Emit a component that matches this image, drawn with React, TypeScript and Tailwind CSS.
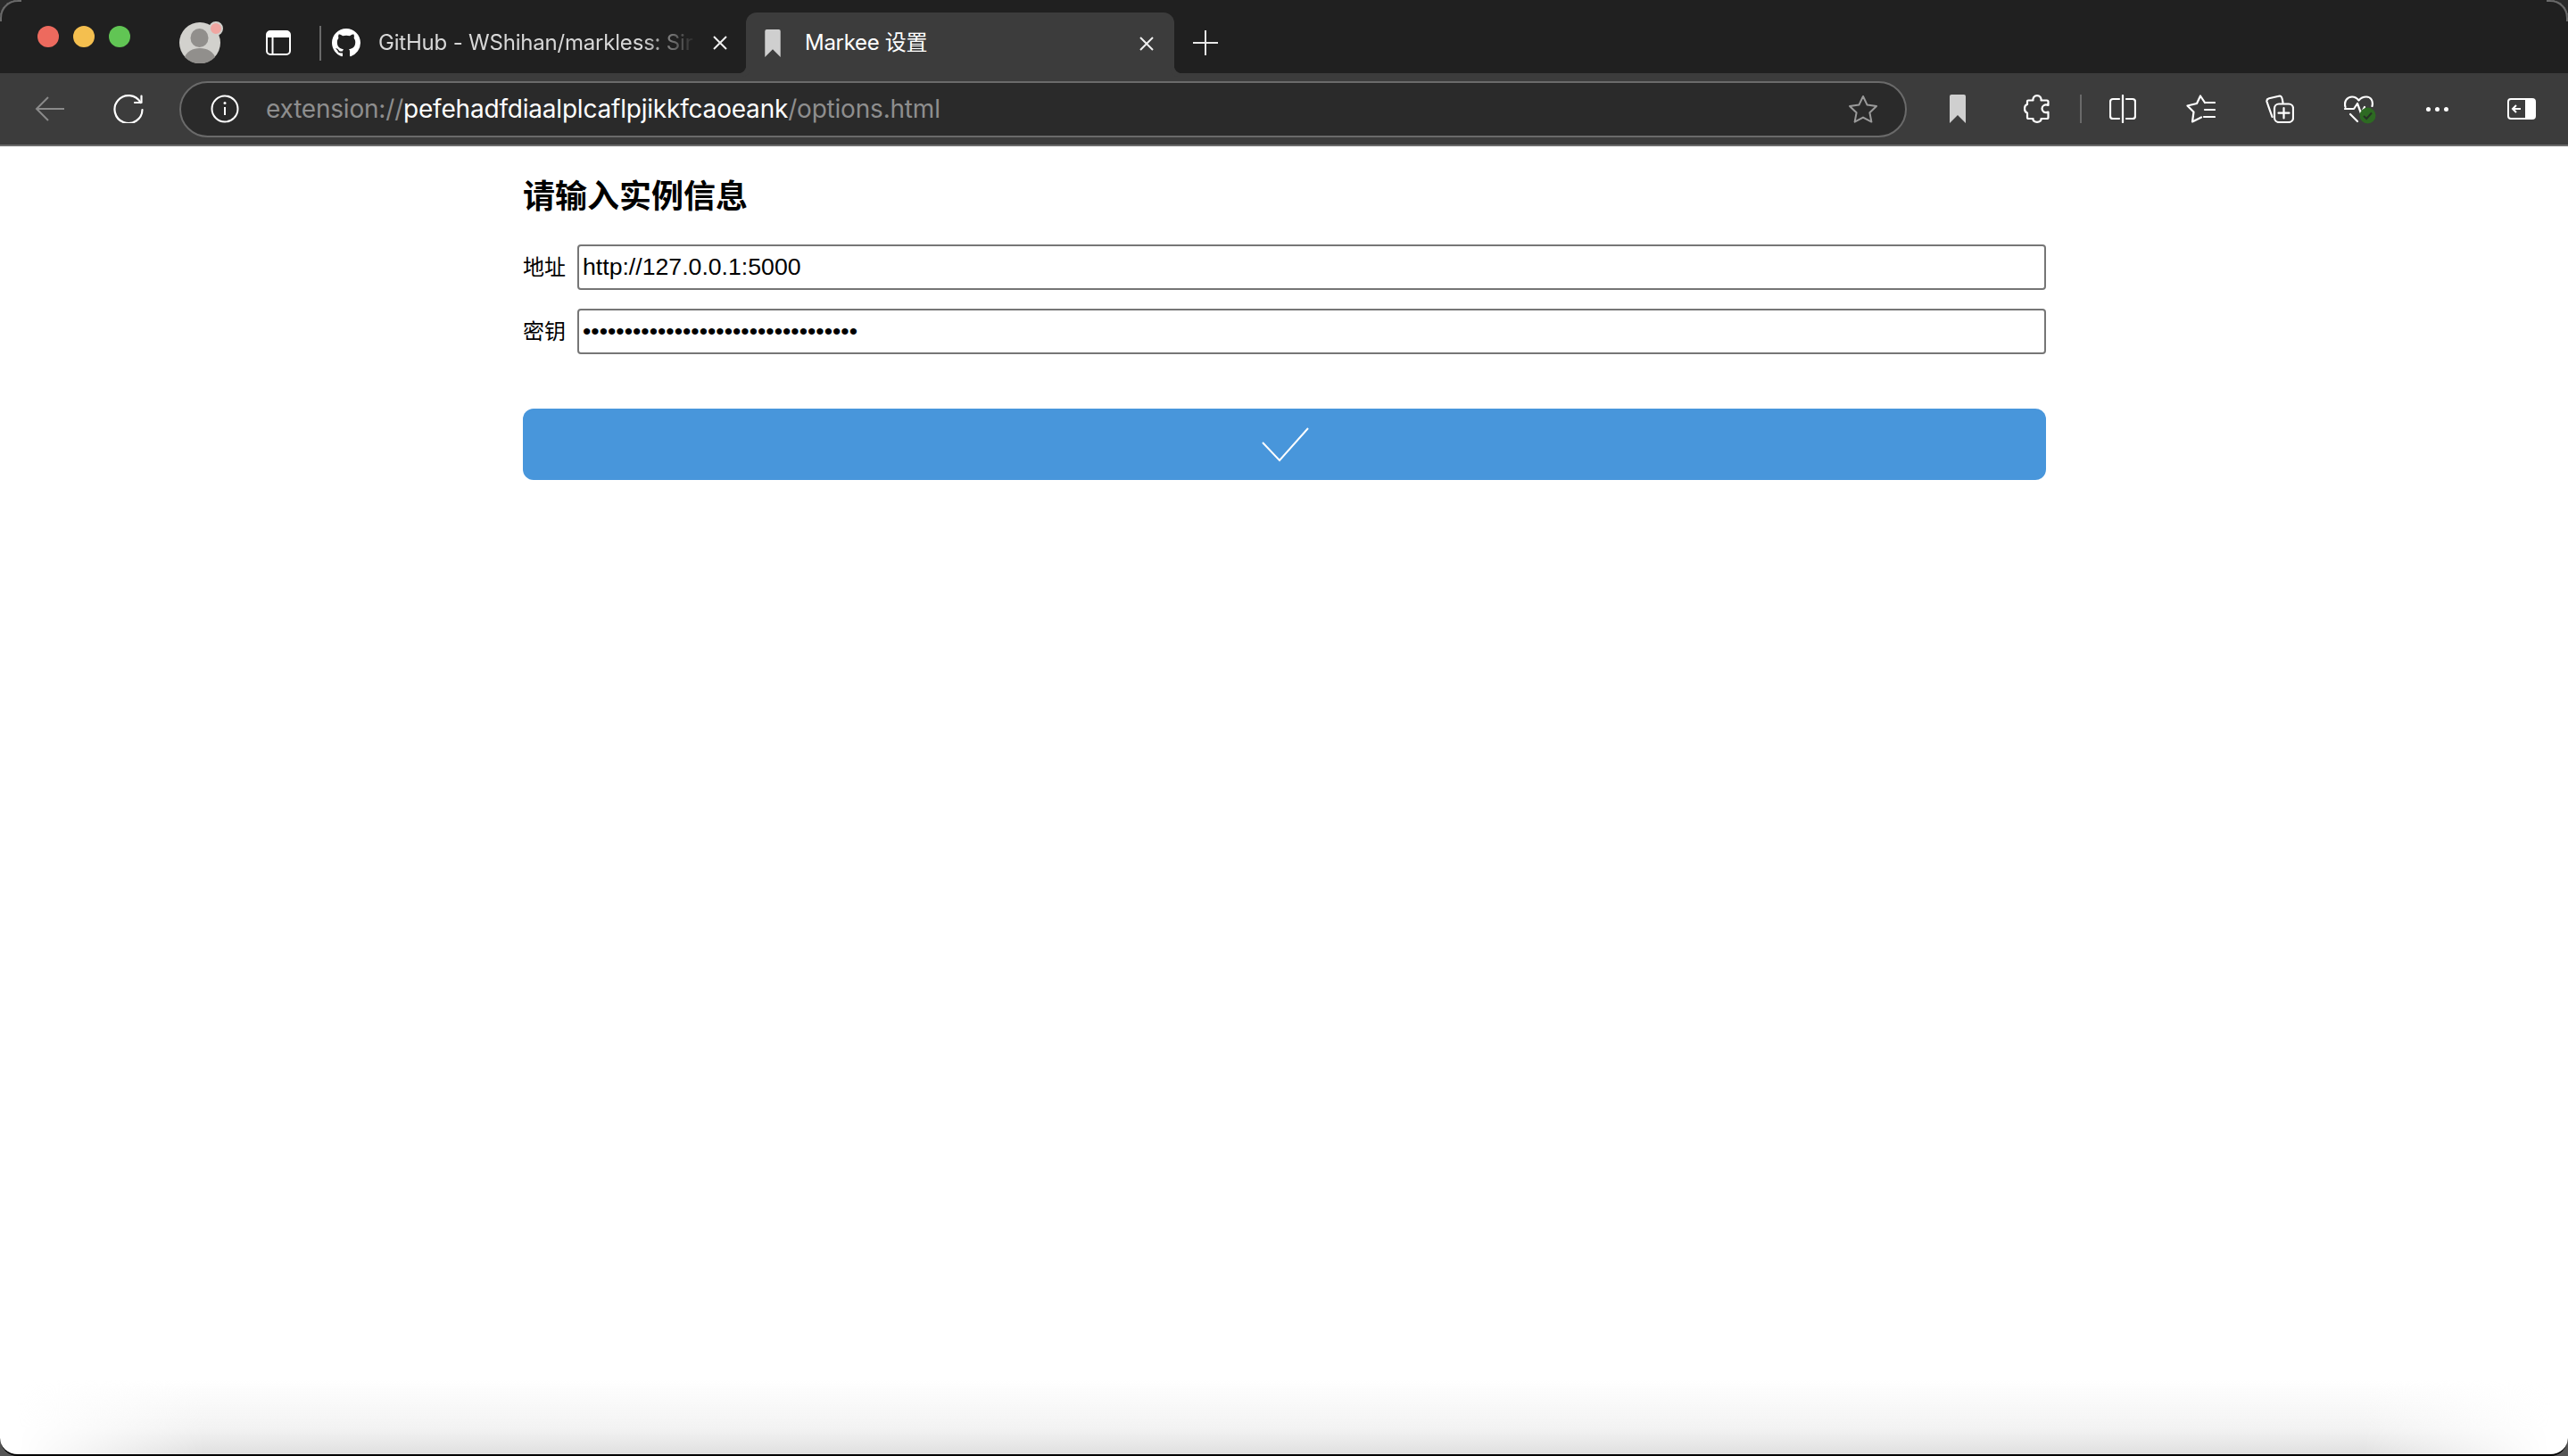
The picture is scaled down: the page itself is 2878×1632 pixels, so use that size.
export default function App() {
  const white = { fill: "none", stroke: "#fff", strokeWidth: 2.2, strokeLinecap: "round" as const, strokeLinejoin: "round" as const };
  const Bookmark = ({ className }: { className: string }) => (
    <svg viewBox="0 0 18 32" className={className}>
      <path d="M0 2a2 2 0 0 1 2-2h14a2 2 0 0 1 2 2v30l-9-9-9 9z" fill="#cfcfcf" />
    </svg>
  );
  const Close = ({ className }: { className: string }) => (
    <svg viewBox="0 0 16 16" className={className}>
      <path d="M1 1L15 15M15 1L1 15" stroke="#f0f0f0" strokeWidth="2" fill="none" />
    </svg>
  );
  return (
    <div className="relative h-[1632px] w-full overflow-hidden bg-[linear-gradient(to_bottom,#2a2a2a,#555555)] font-['Inter','Noto_Sans_CJK_SC',sans-serif]">
      <div className="relative flex h-[1632px] flex-col overflow-hidden rounded-[20px] border-b-2 border-black bg-white">
        {/* tab strip */}
        <div className="flex h-[82px] shrink-0 items-center bg-[#202020] pl-[42px] pt-[14px]">
          <div className="mb-[14px] flex gap-[16px]">
            <div className="h-[24px] w-[24px] rounded-full bg-[#ed6a5e]" />
            <div className="h-[24px] w-[24px] rounded-full bg-[#f4bf4f]" />
            <div className="h-[24px] w-[24px] rounded-full bg-[#61c554]" />
          </div>
          <div className="relative ml-[55px] h-[46px] w-[46px]">
            <svg viewBox="0 0 46 46" className="h-[46px] w-[46px]">
              <circle cx="23" cy="23" r="23" fill="#d2d1cd" />
              <ellipse cx="22.5" cy="17.5" rx="10" ry="10.5" fill="#918f8c" />
              <path d="M6 39C8 33 15 29 23 29S38 33 40 39A23 23 0 0 1 6 39Z" fill="#918f8c" />
            </svg>
            <div className="absolute right-[-3px] top-[-1px] h-[16px] w-[16px] rounded-full border-2 border-[#d2d1cd] bg-[#f0a6a1]" />
          </div>
          <svg viewBox="0 0 28 28" className="ml-[51px] h-[28px] w-[28px]">
            <rect x="1" y="1" width="26" height="26" rx="4" fill="none" stroke="#fff" strokeWidth="2" />
            <path d="M1 5a4 4 0 0 1 4-4h18a4 4 0 0 1 4 4v3H1z" fill="#fff" />
            <path d="M7.5 8v19" stroke="#fff" strokeWidth="2" />
          </svg>
          <div className="ml-[32px] h-[39px] w-[2px] bg-[#6a6a6a]" />
          <svg viewBox="0 0 16 16" className="ml-[12px] h-[32px] w-[32px]">
            <path
              fill="#fff"
              d="M8 0C3.58 0 0 3.58 0 8c0 3.54 2.29 6.53 5.47 7.59.4.07.55-.17.55-.38 0-.19-.01-.82-.01-1.49-2.01.37-2.53-.49-2.69-.94-.09-.23-.48-.94-.82-1.13-.28-.15-.68-.52-.01-.53.63-.01 1.08.58 1.23.82.72 1.21 1.87.87 2.33.66.07-.52.28-.87.51-1.07-1.78-.2-3.64-.89-3.64-3.95 0-.87.31-1.59.82-2.15-.08-.2-.36-1.02.08-2.12 0 0 .67-.21 2.2.82.64-.18 1.32-.27 2-.27.68 0 1.36.09 2 .27 1.53-1.04 2.2-.82 2.2-.82.44 1.1.16 1.92.08 2.12.51.56.82 1.27.82 2.15 0 3.07-1.87 3.75-3.65 3.95.29.25.54.73.54 1.48 0 1.07-.01 1.93-.01 2.2 0 .21.15.46.55.38A8.013 8.013 0 0016 8c0-4.42-3.58-8-8-8z"
            />
          </svg>
          <div className="ml-[20px] w-[358px] overflow-hidden whitespace-nowrap text-[24px] leading-[32px] tracking-[-0.2px] text-[#d8d8d8] [mask-image:linear-gradient(to_right,black_295px,transparent_357px)]">
            GitHub - WShihan/markless: Sir
          </div>
          <Close className="ml-[17px] h-[16px] w-[16px]" />
          {/* active tab */}
          <div className="relative ml-[21px] flex h-[68px] w-[480px] items-center self-end rounded-t-[12px] bg-[#3c3c3c] pl-[21px]">
            <div className="absolute bottom-0 left-[-10px] h-[10px] w-[10px] rounded-br-[8px] shadow-[4px_4px_0_#3c3c3c]" />
            <div className="absolute bottom-0 right-[-10px] h-[10px] w-[10px] rounded-bl-[8px] shadow-[-4px_4px_0_#3c3c3c]" />
            <Bookmark className="h-[31px] w-[18px]" />
            <span className="ml-[27px] whitespace-nowrap text-[24px] leading-[32px] tracking-[-0.3px] text-white">Markee 设置</span>
            <Close className="absolute right-[23px] top-[27px] h-[16px] w-[16px]" />
          </div>
          <svg viewBox="0 0 28 28" className="ml-[21px] h-[28px] w-[28px]">
            <path d="M14 0v28M0 14h28" stroke="#e8e8e8" strokeWidth="2" />
          </svg>
        </div>
        {/* toolbar */}
        <div className="flex h-[82px] shrink-0 items-center border-b-2 border-[#6b6b6b] bg-[#3c3c3c] pl-[39px]">
          <svg viewBox="0 0 33 28" className="h-[28px] w-[33px]">
            <path d="M33 14H2M15 1L2 14l13 13" fill="none" stroke="#8a8a8a" strokeWidth="2" />
          </svg>
          <svg viewBox="0 0 34 32" className="ml-[55px] h-[32px] w-[34px]">
            <path d="M30.5 9A15.5 15.5 0 1 0 32.5 17" {...white} />
            <path d="M31.5 1.5V9H24" {...white} />
          </svg>
          <div className="ml-[40px] flex h-[63px] w-[1936px] items-center rounded-full border-2 border-[#6a6a6a] bg-[#2a2a2a] pl-[33px]">
            <svg viewBox="0 0 32 32" className="h-[32px] w-[32px]">
              <circle cx="16" cy="16" r="14.5" fill="none" stroke="#fff" strokeWidth="2" />
              <path d="M16 14v9" stroke="#fff" strokeWidth="2" />
              <circle cx="16" cy="9.5" r="1.5" fill="#fff" />
            </svg>
            <div className="ml-[30px] flex-1 whitespace-nowrap text-[28px] leading-[36px] tracking-[-0.2px] text-[#8e8e8e]">
              extension://<span className="text-white">pefehadfdiaalplcaflpjikkfcaoeank</span>/options.html
            </div>
            <svg viewBox="0 0 34 32" className="mr-[30px] h-[32px] w-[34px]">
              <path d="M17 2l4.6 9.6 10.4 1.4-7.6 7.2 2 10.4L17 25.6 7.6 30.6l2-10.4L2 13l10.4-1.4z" fill="none" stroke="#9a9a9a" strokeWidth="2" strokeLinejoin="round" />
            </svg>
          </div>
          <Bookmark className="ml-[48px] h-[32px] w-[18px]" />
          <svg viewBox="0 0 30 32" className="ml-[65px] h-[32px] w-[30px]">
            <path d="M5 6.5H10.5C10 3.5 12 1.2 15 1.2S20 3.5 19.5 6.5H26a1.5 1.5 0 0 1 1.5 1.5V12C23.5 10.5 20.5 12.5 20.5 15.8S23.5 21 27.5 19.6V25.5a1.5 1.5 0 0 1-1.5 1.5H19.5C20 29 18 30.8 15 30.8S10 29 10.5 27H5.5A1.5 1.5 0 0 1 4 25.5V20.5C2.2 20 1 18 1 15.8S2.2 11.5 4 11V7.5A1 1 0 0 1 5 6.5Z" {...white} />
          </svg>
          <div className="ml-[33px] h-[32px] w-[2px] bg-[#6a6a6a]" />
          <svg viewBox="0 0 30 32" className="ml-[31px] h-[32px] w-[30px]">
            <path d="M11 5H4a3 3 0 0 0-3 3v16a3 3 0 0 0 3 3h7M19 5h7a3 3 0 0 1 3 3v16a3 3 0 0 1-3 3h-7" {...white} />
            <path d="M15 1v30" {...white} />
          </svg>
          <svg viewBox="0 0 33 32" className="ml-[56px] h-[32px] w-[33px]">
            <path d="M21 9L16 1.5 12 10 1.5 12.5 8.5 19.5 7 30.5 17 25.5" {...white} />
            <path d="M21 9H32M21 17H32M20 25H32" {...white} />
          </svg>
          <svg viewBox="0 0 32 32" className="ml-[56px] h-[32px] w-[32px]">
            <path d="M7.5 25L1.5 8Q1 5 4 4.2L16 1.5Q18.5 1.2 19.5 9" {...white} />
            <rect x="10" y="10.5" width="21" height="20.5" rx="5" {...white} />
            <path d="M20.5 15v11.5M14.5 20.7h12" {...white} />
          </svg>
          <svg viewBox="0 0 36 32" className="ml-[56px] mt-[2px] h-[32px] w-[36px]">
            <path d="M1.5 13C-.5 6 4 1.5 9 1.5 12 1.5 14.5 3 16.5 5.5 18.5 3 21 1.5 25 1.5 30 1.5 33 6 31.5 12" {...white} />
            <path d="M1 15H11L15 9 19 20 23 13" {...white} />
            <path d="M7 21L15 29" {...white} />
            <circle cx="26.5" cy="22.5" r="9" fill="#2d6a22" />
            <path d="M22 23l3.2 3 5.8-6.5" fill="none" stroke="#263226" strokeWidth="2" />
          </svg>
          <div className="ml-[56px] flex gap-[5px]">
            <div className="h-[5px] w-[5px] rounded-full bg-white" />
            <div className="h-[5px] w-[5px] rounded-full bg-white" />
            <div className="h-[5px] w-[5px] rounded-full bg-white" />
          </div>
          <svg viewBox="0 0 32 24" className="ml-[66px] h-[24px] w-[32px]">
            <rect x="1" y="1" width="30" height="22" rx="3" fill="none" stroke="#fff" strokeWidth="2" />
            <path d="M20 1h8a3 3 0 0 1 3 3v16a3 3 0 0 1-3 3h-8z" fill="#fff" />
            <path d="M15 12H6M10 8l-4 4 4 4" fill="none" stroke="#fff" strokeWidth="2" />
          </svg>
        </div>
        {/* page */}
        <main className="ml-[586px] w-[1707px] font-['Liberation_Sans','Noto_Sans_CJK_SC',sans-serif]">
          <h1 className="mt-[39px] text-[36px] font-bold leading-[36px] text-black">请输入实例信息</h1>
          <div className="mt-[35px] flex items-center gap-[13px]">
            <label className="text-[24px] leading-[30px] text-black">地址</label>
            <input readOnly value="http://127.0.0.1:5000" className="h-[51px] flex-1 rounded-[4px] border-2 border-[#767676] bg-white px-[4px] text-[26.67px] text-black" />
          </div>
          <div className="mt-[21px] flex items-center gap-[13px]">
            <label className="text-[24px] leading-[30px] text-black">密钥</label>
            <input readOnly type="password" value="abcdefghijklmnopqrstuvwxyz0123456" className="h-[51px] flex-1 rounded-[4px] border-2 border-[#767676] bg-white px-[4px] text-[26.67px] text-black" />
          </div>
          <button className="mt-[61px] flex h-[80px] w-full items-center justify-center rounded-[12px] bg-[#4896db]">
            <svg viewBox="0 0 54 40" className="h-[40px] w-[54px]">
              <path d="M2 18L21 38 53 2" fill="none" stroke="#fff" strokeWidth="2" />
            </svg>
          </button>
        </main>
        {/* window shadow and corner highlights */}
        <div className="pointer-events-none absolute bottom-0 left-0 right-0 h-[84px] bg-[linear-gradient(to_top,#e0e0e0,#f3f3f3_35%,#ffffff00)] [mask-image:linear-gradient(to_right,transparent_20px,black_230px,black_calc(100%-230px),transparent_calc(100%-20px))]" />
        <div className="pointer-events-none absolute left-0 top-0 h-[24px] w-[24px] rounded-tl-[20px] border-l-2 border-t-2 border-[#6a6a6a]" />
        <div className="pointer-events-none absolute right-0 top-0 h-[24px] w-[24px] rounded-tr-[20px] border-r-2 border-t-2 border-[#6a6a6a]" />
      </div>
    </div>
  );
}
